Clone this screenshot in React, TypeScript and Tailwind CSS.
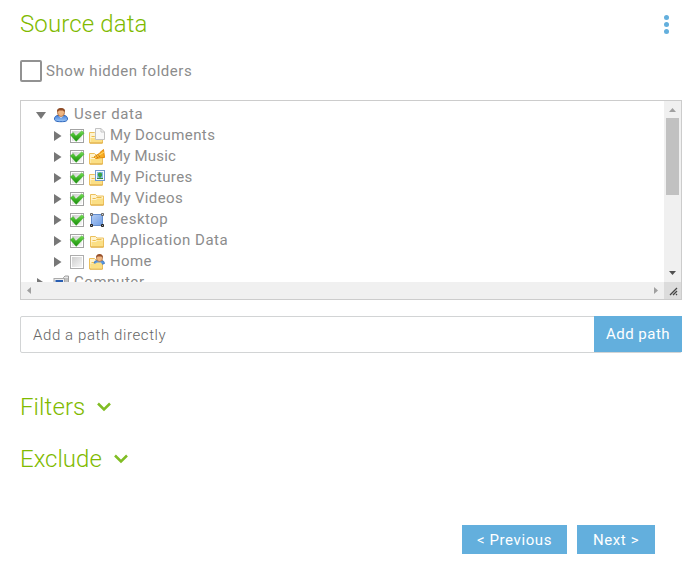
import React from 'react';

function Arrow({ open = false }: { open?: boolean }) {
  return (
    <svg width="10" height="10" viewBox="0 0 10 10" className="shrink-0" fill="#777">
      <path d={open ? 'M0 2H10L5 9Z' : 'M1 0L8.5 5L1 10Z'} />
    </svg>
  );
}

function Check({ checked }: { checked: boolean }) {
  return (
    <svg width="16" height="16" viewBox="0 0 16 16" className="shrink-0">
      <defs>
        <linearGradient id="box" x1="0" y1="0" x2="1" y2="1">
          <stop offset="0" stopColor="#cfcfcf" />
          <stop offset="1" stopColor="#f6f6f6" />
        </linearGradient>
        <linearGradient id="tick" x1="0" y1="0" x2="0" y2="1">
          <stop offset="0" stopColor="#7be05c" />
          <stop offset=".5" stopColor="#3cb325" />
          <stop offset="1" stopColor="#1c8a10" />
        </linearGradient>
      </defs>
      <rect x="1.5" y="1.5" width="13" height="13" fill="#fff" stroke={checked ? '#a3a3a3' : '#adadad'} />
      <rect x="3" y="3" width="10" height="10" fill="url(#box)" />
      {checked && <path d="M1.2 6.8L4.3 4.6L6.9 8L12.8 2.8L15.2 5L7.2 13.4Z" fill="url(#tick)" stroke="#38ad24" strokeWidth=".4" />}
    </svg>
  );
}

type Kind = 'user' | 'documents' | 'music' | 'pictures' | 'folder' | 'desktop' | 'home' | 'computer';

function Folder({ low = false }: { low?: boolean }) {
  return (
    <g transform={low ? 'translate(-1 1)' : undefined}>
      <path d="M1.5 14V3.5H6.5L8 5H14.5V14Z" fill="#fff3cd" stroke="#ecc05c" />
      <path d="M2.5 13.5V9H7L8.5 7.5H14V13.5Z" fill="#fbdf85" />
      <path d="M3.5 7.5H6.5L7.8 6.5H12.5" fill="none" stroke="#edbd4c" />
      <path d="M2 14H14.5" stroke="#dba331" />
    </g>
  );
}

function Icon({ kind }: { kind: Kind }) {
  return (
    <svg width="16" height="16" viewBox="0 0 16 16" className="shrink-0 overflow-visible">
      {kind === 'user' && (
        <>
          <defs>
            <linearGradient id="shirt" x2="0" y2="1">
              <stop stopColor="#4b83d8" />
              <stop offset="1" stopColor="#9cc8fa" />
            </linearGradient>
          </defs>
          <path d="M1.5 12C1.5 9.7 3 8.5 5 8.5H11C13 8.5 14.5 9.7 14.5 12C14.5 14 12.5 14.7 8 14.7S1.5 14 1.5 12Z" fill="url(#shirt)" stroke="#2b65bb" />
          <path d="M6 9L8 11L10 9" fill="#fff" />
          <ellipse cx="8" cy="5.5" rx="3.5" ry="4" fill="#eeb582" stroke="#a66636" strokeWidth=".8" />
          <path d="M4 5Q3.5 1 8 1T12 5L10 3.5H6Z" fill="#8f4c27" />
        </>
      )}
      {(kind === 'folder' || kind === 'documents' || kind === 'music' || kind === 'pictures') && <Folder low={kind !== 'folder'} />}
      {kind === 'documents' && <path d="M6.5 .5H12L15.5 4V11.5H6.5ZM12 .5V4H15.5" fill="#f8f8f8" stroke="#c2c2c2" />}
      {kind === 'music' && (
        <>
          <path d="M5 8L9 5.5L11 3.5L14.5 .5L15.5 8.5L11 8.8L7 9.5Z" fill="#f9ad21" stroke="#e38b0b" />
          <path d="M6 8.5L12 5L15 3" fill="none" stroke="#ffda69" />
          <path d="M7 6.5L9 9M9 5.5L11 8" stroke="#b96b07" strokeWidth=".8" />
        </>
      )}
      {kind === 'pictures' && (
        <>
          <rect x="6.5" y=".5" width="9" height="10" fill="#f5faff" stroke="#7199cd" />
          <rect x="8" y="2" width="6" height="7" fill="#88bce8" />
          <circle cx="11" cy="4.7" r="2.2" fill="#37a344" />
          <path d="M10.5 6H11.5V8H14V9H8V8H10.5Z" fill="#348a42" />
        </>
      )}
      {kind === 'desktop' && (
        <>
          <defs>
            <linearGradient id="desk" x2="1" y2="1">
              <stop stopColor="#b5cef5" />
              <stop offset="1" stopColor="#6d9be2" />
            </linearGradient>
          </defs>
          <rect x="2.5" y="2.5" width="11" height="11" fill="url(#desk)" stroke="#648dcc" />
          <path d="M1.5 1.5h2v2h-2zM12.5 1.5h2v2h-2z" fill="#ddd" stroke="#666" />
          <path d="M1.5 12.5h2v2h-2zM12.5 12.5h2v2h-2z" fill="#aaa" stroke="#222" />
        </>
      )}
      {kind === 'home' && (
        <>
          <Folder low />
          <path d="M5 10Q5 6.5 8 6.5H12Q15.5 6.5 15.5 9.5Q14 10.5 11 10Z" fill="#5b99e5" stroke="#3974bd" strokeWidth=".8" />
          <path d="M1.5 14.5V9.5H6.5L8 8.5H12L13 10V14.5Z" fill="#fbdf85" />
          <ellipse cx="10.5" cy="4" rx="3" ry="3.5" fill="#efb784" stroke="#aa683b" strokeWidth=".7" />
          <path d="M7 4Q7 0 10.5 0T14 4L12.5 2.5H8.5Z" fill="#96512c" />
        </>
      )}
      {kind === 'computer' && (
        <>
          <path d="M10.5 2.5L12 1H15.5V13.5H10.5Z" fill="#e7e7e7" stroke="#a0a0a0" />
          <path d="M12 4H15M12 6H15" stroke="#999" />
          <rect x="1" y="3.5" width="10.5" height="8" fill="#eee" stroke="#aaa" />
          <rect x="2.5" y="5" width="7.5" height="5" fill="#275db1" />
        </>
      )}
    </svg>
  );
}

const rows: { name: string; kind: Kind; checked: boolean; spacing: string }[] = [
  { name: 'My Documents', kind: 'documents', checked: true, spacing: 'tracking-[0.4px]' },
  { name: 'My Music', kind: 'music', checked: true, spacing: 'tracking-[0.2px]' },
  { name: 'My Pictures', kind: 'pictures', checked: true, spacing: 'tracking-[0.35px]' },
  { name: 'My Videos', kind: 'folder', checked: true, spacing: 'tracking-[0.35px]' },
  { name: 'Desktop', kind: 'desktop', checked: true, spacing: 'tracking-[0.45px]' },
  { name: 'Application Data', kind: 'folder', checked: true, spacing: 'tracking-[0.5px]' },
  { name: 'Home', kind: 'home', checked: false, spacing: 'tracking-[0.35px]' },
];

function Section({ title, spacing }: { title: string; spacing: string }) {
  return (
    <button className="flex h-[52px] items-center text-[24px] leading-8 font-light text-[#7fba00]">
      <span className={spacing}>{title}</span>
      <svg width="14" height="10" viewBox="0 0 14 10" className="ml-3" fill="none" stroke="#80bd24" strokeWidth="2.5">
        <path d="M1 1.5L7 7.5L13 1.5" />
      </svg>
    </button>
  );
}

export default function App() {
  return (
    <main className="h-[582px] w-[694px] overflow-hidden bg-white pl-5 font-['Roboto','Liberation_Sans',sans-serif] text-[15px] text-[#8c8c8c]">
      <header className="flex h-12 w-[662px] items-center justify-between">
        <h1 className="text-[24px] leading-8 font-light tracking-[0.12px] text-[#7fba00]">Source data</h1>
        <button aria-label="Options" className="mr-[13px] flex flex-col gap-[2px]">
          <span className="size-[5px] rounded-full bg-[#63afdd]" />
          <span className="size-[5px] rounded-full bg-[#63afdd]" />
          <span className="size-[5px] rounded-full bg-[#63afdd]" />
        </button>
      </header>
      <label className="mt-3 flex h-[22px] items-center gap-1">
        <span className="size-[22px] rounded-[2px] border-2 border-[#929292]" />
        <span className="tracking-[0.53px]">Show hidden folders</span>
      </label>

      <section className="mt-[18px] grid h-[200px] w-[662px] grid-cols-[1fr_17px] grid-rows-[1fr_17px] border border-[#ccc]">
        <div className="h-[181px] overflow-hidden pt-[3px]">
          <div className="flex h-[21px] items-center pl-[15px]">
            <Arrow open /><span className="ml-[7px] flex"><Icon kind="user" /></span>
            <span className="ml-[5px] tracking-[0.6px]">User data</span>
          </div>
          {rows.map((row) => (
            <div key={row.name} className="flex h-[21px] items-center pl-[32px]">
              <Arrow />
              <span className="ml-[6px] flex"><Check checked={row.checked} /></span>
              <span className="ml-1 flex"><Icon kind={row.kind} /></span>
              <span className={`ml-[5px] ${row.spacing}`}>{row.name}</span>
            </div>
          ))}
          <div className="flex h-[21px] items-center pl-[15px]">
            <Arrow /><span className="ml-[7px] flex"><Icon kind="computer" /></span>
            <span className="ml-[5px] tracking-[0.55px]">Computer</span>
          </div>
        </div>
        <div className="flex flex-col items-center bg-[#f0f0f0]">
          <svg width="17" height="17" className="shrink-0" fill="#a0a0a0"><path d="M5 11H12L8.5 7Z" /></svg>
          <div className="h-[77px] w-[13px] bg-[#c1c1c1]" />
          <svg width="17" height="17" className="mt-auto" fill="#505050"><path d="M5 6H12L8.5 10Z" /></svg>
        </div>
        <div className="flex justify-between bg-[#f0f0f0]">
          <svg width="17" height="17" fill="#a0a0a0"><path d="M10 5V12L6 8.5Z" /></svg>
          <svg width="17" height="17" fill="#a0a0a0"><path d="M7 5V12L11 8.5Z" /></svg>
        </div>
        <div className="bg-[#dcdcdc]">
          <svg width="17" height="17" stroke="#444" strokeWidth="1.3"><path d="M6 13L13 6M9 13L13 9M12 13L13 12" /></svg>
        </div>
      </section>

      <div className="mt-4 flex h-[37px] w-[662px] rounded-[2px] border border-[#d2d4d5]">
        <input aria-label="Path" className="min-w-0 flex-1 px-3 pt-[2px] font-light tracking-[0.6px] outline-none placeholder:text-[#666]" placeholder="Add a path directly" />
        <button className="-mt-px -mr-px h-9 w-[88px] bg-[#63afdd] tracking-[0.5px] text-white">Add path</button>
      </div>

      <div className="mt-7">
        <Section title="Filters" spacing="tracking-[0.1px]" />
        <Section title="Exclude" spacing="tracking-[0px]" />
      </div>
      <footer className="mt-10 flex gap-[10px] pl-[442px]">
        <button className="h-[29px] w-[105px] bg-[#63afdd] pt-px tracking-[0.6px] text-white">&lt; Previous</button>
        <button className="h-[29px] w-[78px] bg-[#63afdd] pt-px tracking-[0.6px] text-white">Next &gt;</button>
      </footer>
    </main>
  );
}
